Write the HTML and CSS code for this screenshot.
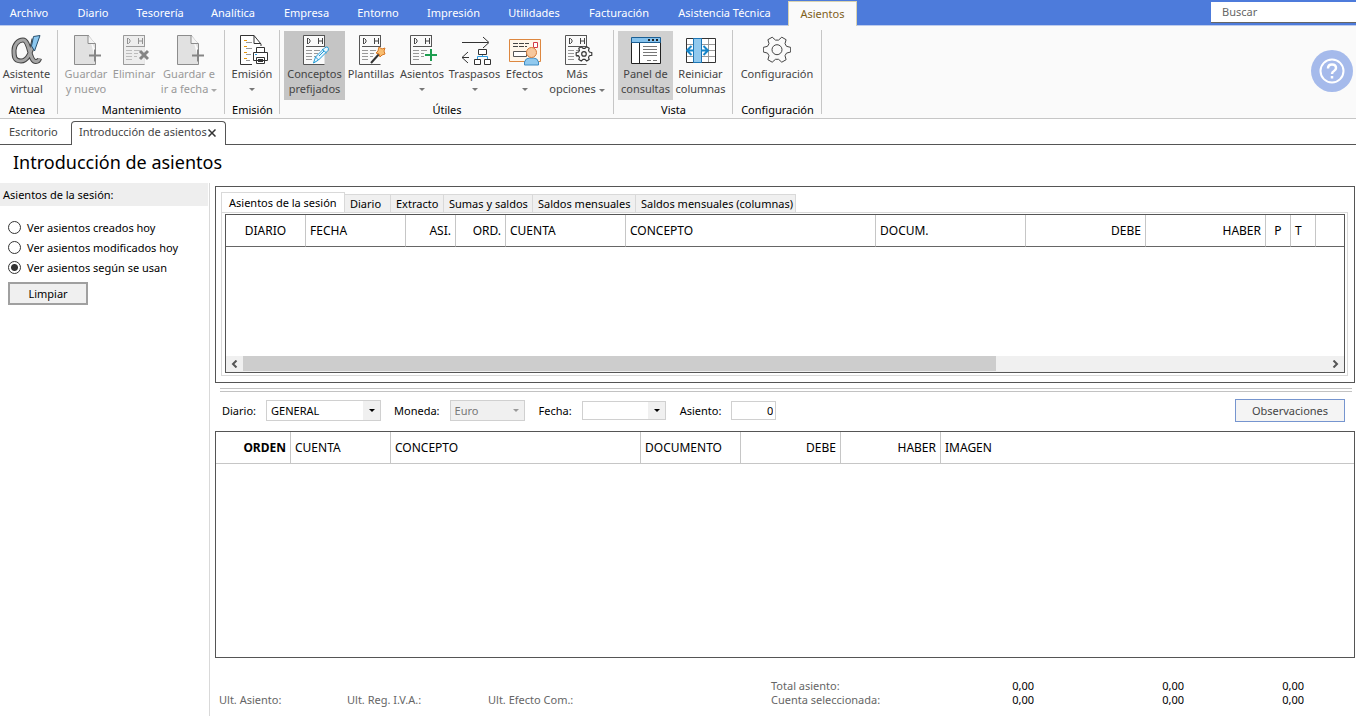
FILE: index.html
```html
<!DOCTYPE html>
<html lang="es">
<head>
<meta charset="utf-8">
<title>Introducción de asientos</title>
<link rel="stylesheet" href="styles.css">
</head>
<body>
<svg class="defs" width="0" height="0" aria-hidden="true">
  <defs>
    <g id="sheet">
      <path d="M21.500 1.500H.5v29h21" fill="#fafafa" stroke="#555"/>
      <path d="M21.500 1v11M3 12.500h19" stroke="#555" fill="none"/>
      <path d="M4.500 4v6M4 4.500h1.500l1.500 1.500v2l-1.500 1.500H4M15.500 4v6M19.500 4v6M15.500 7h4" fill="none" stroke="#444"/>
      <path d="M3 16.500h6M11 16.500h6M3 19.500h6M11 19.500h4M3 22.500h6M11 22.500h3M3 25.500h6" stroke="#999" fill="none"/>
    </g>
    <g id="newdoc">
      <path d="M15 1.500H.5v29h21V26M21.500 16v-6L14 1.500" fill="#e1e1e1" stroke="#8c8c8c"/>
      <path d="M14 1.500v8h7.500" fill="#f5f5f5" stroke="#8c8c8c"/>
      <path d="M15 21.500h12M21 15.500v12" stroke="#858585" stroke-width="2" fill="none"/>
    </g>
    <path id="cog" transform="rotate(90 14 14.700)" d="M11.700 1h4.600l1.100 4.200 2.600 1.500 4-1.100 2.500 4.300-2.900 3.300v3l2.900 3.300-2.500 4.300-4-1.100-2.600 1.500-1.100 4.200h-4.600l-1.100-4.200-2.600-1.500-4 1.100-2.500-4.300 2.900-3.300v-3L1.500 9.900 4 5.600l4 1.100 2.600-1.500z"/>
  </defs>
</svg>

<nav class="menubar">
  <div class="menu">
    <a href="#">Archivo</a><a href="#">Diario</a><a href="#">Tesorería</a><a href="#">Analítica</a><a href="#">Empresa</a><a href="#">Entorno</a><a href="#">Impresión</a><a href="#">Utilidades</a><a href="#">Facturación</a><a href="#">Asistencia Técnica</a><a href="#" class="current">Asientos</a>
  </div>
  <input class="search" type="text" placeholder="Buscar" aria-label="Buscar">
</nav>

<header class="ribbon">
  <section class="group g-atenea">
    <div class="tools">
      <button class="tool"><svg width="32" height="32" viewBox="0 0 32 32"><path d="M23 5C21 16 17 27 10 27S3 22 3 16.500 7 6 12 6C19 6 18 28 25 27.500c2 0 3-1 3.500-3" fill="none" stroke="#444" stroke-width="5"/><path d="M23 5C21 16 17 27 10 27S3 22 3 16.500 7 6 12 6C19 6 18 28 25 27.500c2 0 3-1 3.500-3" fill="none" stroke="#a5a5a5" stroke-width="3"/><path d="M22.500 2.500l6.500-1-5.500 15.500-3-5z" fill="#8cc8f0" stroke="#28506e"/></svg><span>Asistente<br>virtual</span></button>
    </div>
    <h2>Atenea</h2>
  </section>
  <section class="group g-mant">
    <div class="tools">
      <button class="tool doc" disabled><svg width="28" height="32" viewBox="0 0 28 32"><use href="#newdoc"/></svg><span>Guardar<br>y nuevo</span></button>
      <button class="tool doc" disabled><svg width="26" height="32" viewBox="0 0 26 32"><path d="M0 1h22v30H0z" fill="#e1e1e1"/><g opacity=".5"><use href="#sheet"/></g><path d="M17 17l8 8M25 17l-8 8" stroke="#858585" stroke-width="3"/></svg><span>Eliminar</span></button>
      <button class="tool doc" disabled><svg width="28" height="32" viewBox="0 0 28 32"><use href="#newdoc"/></svg><span>Guardar e<br>ir a fecha <i class="caret"></i></span></button>
    </div>
    <h2>Mantenimiento</h2>
  </section>
  <section class="group g-emision">
    <div class="tools">
      <button class="tool doc"><svg width="28" height="32" viewBox="0 0 28 32"><path d="M21 12v-2L14 1.500H.5v29H12" fill="#fff" stroke="#333"/><path d="M14 1.500v8h7" fill="none" stroke="#333"/><path d="M4 6.500h3M4 12.500h3M4 18.500h3M4 24.500h3" stroke="#e8960c"/><path d="M6 8.500h6M6 14.500h6M6 20.500h5M6 26.500h4" stroke="#999"/><path d="M13.500 18.500h14v8h-14zM16.500 18v-4.500h8V18M16.500 23.500h8v6h-8z" fill="#fff" stroke="#333"/><path d="M18 25.500h5M18 27.500h5" stroke="#333"/><path d="M15 20.500h2" stroke="#2a9ae0"/></svg><span>Emisión</span><i class="caret"></i></button>
    </div>
    <h2>Emisión</h2>
  </section>
  <section class="group g-utiles">
    <div class="tools">
      <button class="tool pressed doc"><svg width="26" height="32" viewBox="0 0 26 32"><use href="#sheet"/><path d="M10.500 29l2-6L22 13.500q2-1 3 0t0 3L15.500 26zM19 15l4.500 4M12.500 23l3 3M21 17l-5 5" fill="#eaf6ff" stroke="#1d9ad6"/></svg><span>Conceptos<br>prefijados</span></button>
      <button class="tool doc"><svg width="27" height="32" viewBox="0 0 27 32"><use href="#sheet"/><path d="M12 29l9-10" stroke="#333" stroke-width="2"/><path d="M20 13l3 2 3-1-1 3 1 3-3 1-2 2-1-3-3-1 2-2z" fill="#f8bd70" stroke="#d87825"/></svg><span>Plantillas</span></button>
      <button class="tool doc"><svg width="28" height="32" viewBox="0 0 28 32"><use href="#sheet"/><path d="M14 20.500h13M20.500 14v13" stroke="#fafafa" stroke-width="4"/><path d="M15 21h12M21 15v12" stroke="#1e9e50" stroke-width="2"/></svg><span>Asientos</span><i class="caret"></i></button>
      <button class="tool doc"><svg width="30" height="32" viewBox="0 0 30 32"><path d="M1 8.500h26M22 3l6 5.500-6 5.500M8 23.500H1M7 18l-6 5.500L7 29" fill="none" stroke="#333"/><path d="M17.500 15.500h8v5h-8zM13.500 25.500h6v5h-6zM23.500 25.500h6v5h-6z" fill="#fff" stroke="#333"/><path d="M21.500 21v1.500M16.500 25v-2.500h10V25" fill="none" stroke="#2a9ae0"/></svg><span>Traspasos</span><i class="caret"></i></button>
      <button class="tool"><svg width="32" height="32" viewBox="0 0 32 32"><path d="M.5 5.500h31v22H.5z" fill="#fff6ea" stroke="#dd8740"/><path d="M4 9.500h16M4 12.500h14" stroke="#444" stroke-dasharray="5 1"/><path d="M4.500 17.500h13v5h-13z" fill="#fff" stroke="#555"/><path d="M24.500 8.500h4v5h-4z" fill="#fff" stroke="#d33b48"/><path d="M15.500 31v-3q1-4 5-4h4q4 0 5 4v3z" fill="#91c9ee" stroke="#3f8cc4"/><circle cx="22.500" cy="18.500" r="5" fill="#f6c79c" stroke="#d77b38"/></svg><span>Efectos</span><i class="caret"></i></button>
      <button class="tool doc"><svg width="28" height="32" viewBox="0 0 28 32"><use href="#sheet"/><g transform="translate(11 11.500) scale(.57)" fill="#fafafa" stroke="#333" stroke-width="2"><use href="#cog"/><circle cx="14" cy="14.700" r="4"/></g></svg><span>Más<br>opciones <i class="caret"></i></span></button>
    </div>
    <h2>Útiles</h2>
  </section>
  <section class="group g-vista">
    <div class="tools">
      <button class="tool pressed light"><svg width="30" height="32" viewBox="0 0 30 32"><path d="M.5 4.500h29v25H.5z" fill="#fff" stroke="#222"/><path d="M.5 3.500h29v5H.5z" fill="#86c2ec" stroke="#1b5f94"/><path d="M17 6h2M21 6h2M25 6h2" stroke="#222" stroke-width="2"/><path d="M8.500 9v20" stroke="#222"/><path d="M12 12.500h14M12 15.500h14M12 18.500h14M12 21.500h14M16 26.500h4M22 26.500h4" stroke="#777"/></svg><span>Panel de<br>consultas</span></button>
      <button class="tool"><svg width="30" height="32" viewBox="0 0 30 32"><path d="M.5 4.500h29v24H.5z" fill="#fff" stroke="#333"/><path d="M22.500 5v23M1 10.500h28M1 16.500h28M1 22.500h28" stroke="#999"/><path d="M7.500 4.500h8v24h-8z" fill="#91c9ee" stroke="#1b75b5"/><path d="M8 16.500H1M5.500 12L1 16.500 5.500 21M15 16.500h6M17.500 12l4.500 4.500-4.500 4.500" fill="none" stroke="#1785c8" stroke-width="2"/></svg><span>Reiniciar<br>columnas</span></button>
    </div>
    <h2>Vista</h2>
  </section>
  <section class="group g-config">
    <div class="tools">
      <button class="tool"><svg width="28" height="32" viewBox="0 0 28 32"><g transform="translate(0 1)" fill="none" stroke="#444" stroke-linejoin="round"><use href="#cog"/><circle cx="14" cy="14.700" r="5"/></g></svg><span>Configuración</span></button>
    </div>
    <h2>Configuración</h2>
  </section>
  <button class="help" aria-label="Ayuda"><svg width="42" height="42" viewBox="0 0 42 42"><circle cx="21" cy="21" r="21" fill="#a5baeb"/><g fill="none" stroke="#fff" stroke-width="2"><circle cx="21" cy="21" r="11.500"/><path d="M17 18.500q0-4 4-4t4 3.500q0 2-2 3t-2 3" stroke-width="2.500"/><path d="M21 26v2.500" stroke-width="2.500"/></g></svg></button>
</header>

<div class="doctabs">
  <a href="#" class="doctab">Escritorio</a>
  <div class="doctab open"><a href="#">Introducción de asientos</a><button aria-label="Cerrar"><svg width="8" height="8" viewBox="0 0 8 8"><path d="M.5 .5l7 7M7.500 .5l-7 7" stroke="#333" stroke-width="1.500"/></svg></button></div>
  <div class="rest"></div>
</div>

<h1>Introducción de asientos</h1>

<div class="workspace">
  <aside class="sidebar">
    <h3>Asientos de la sesión:</h3>
    <form class="filters">
      <label><input type="radio" name="ver">Ver asientos creados hoy</label>
      <label><input type="radio" name="ver">Ver asientos modificados hoy</label>
      <label><input type="radio" name="ver" checked>Ver asientos según se usan</label>
      <button type="button">Limpiar</button>
    </form>
  </aside>

  <main class="content">
    <section class="session">
      <div class="subtabs">
        <button class="on">Asientos de la sesión</button><button>Diario</button><button>Extracto</button><button>Sumas y saldos</button><button>Saldos mensuales</button><button>Saldos mensuales (columnas)</button>
      </div>
      <div class="tabpage">
        <div class="grid">
          <table class="entries">
            <colgroup><col class="w80"><col class="w100"><col class="w50"><col class="w50"><col class="w120"><col class="w250"><col class="w150"><col class="w120"><col class="w120"><col class="w25"><col class="w25"><col></colgroup>
            <thead><tr><th class="mid">DIARIO</th><th>FECHA</th><th class="num">ASI.</th><th class="num">ORD.</th><th>CUENTA</th><th>CONCEPTO</th><th>DOCUM.</th><th class="num">DEBE</th><th class="num">HABER</th><th class="mid">P</th><th>T</th><th></th></tr></thead>
          </table>
          <div class="hscroll">
            <button aria-label="Anterior"><svg width="7" height="8" viewBox="0 0 7 8"><path d="M5.500 0.500L2 4l3.500 3.500" fill="none" stroke="#555" stroke-width="2"/></svg></button>
            <div class="track"><div class="thumb"></div></div>
            <button aria-label="Siguiente"><svg width="7" height="8" viewBox="0 0 7 8"><path d="M1.500 0.500L5 4 1.500 7.500" fill="none" stroke="#555" stroke-width="2"/></svg></button>
          </div>
        </div>
      </div>
    </section>

    <div class="splitter"></div>

    <form class="entry">
      <label for="diario">Diario:</label>
      <div class="combo c-diario"><select id="diario"><option>GENERAL</option></select></div>
      <label for="moneda">Moneda:</label>
      <div class="combo c-moneda off"><select id="moneda" disabled><option>Euro</option></select></div>
      <label for="fecha">Fecha:</label>
      <div class="combo c-fecha"><select id="fecha"><option></option></select></div>
      <label for="asiento">Asiento:</label>
      <input id="asiento" type="text" value="0">
      <button type="button" class="notes">Observaciones</button>
    </form>

    <section class="lines">
      <table>
        <colgroup><col class="w75"><col class="w100"><col class="w250"><col class="w100"><col class="w100"><col class="w100"><col></colgroup>
        <thead><tr><th class="num strong">ORDEN</th><th>CUENTA</th><th>CONCEPTO</th><th>DOCUMENTO</th><th class="num">DEBE</th><th class="num">HABER</th><th>IMAGEN</th></tr></thead>
      </table>
    </section>

    <footer class="totals">
      <div class="last"><span>Ult. Asiento:</span><span>Ult. Reg. I.V.A.:</span><span>Ult. Efecto Com.:</span></div>
      <div class="sums">
        <span>Total asiento:</span><b>0,00</b><b>0,00</b><b>0,00</b>
        <span>Cuenta seleccionada:</span><b>0,00</b><b>0,00</b><b>0,00</b>
      </div>
    </footer>
  </main>
</div>
</body>
</html>
```

FILE: styles.css
```css
* { box-sizing: border-box; }
body {
  margin: 0;
  min-height: 100vh;
  display: flex;
  flex-direction: column;
  background: #fff;
  color: #000;
  font: 11px/15px "Noto Sans", "Open Sans", sans-serif;
}
button, input, select { font: inherit; color: inherit; margin: 0; }
button { padding: 0; border: 0; background: none; }
a { color: inherit; text-decoration: none; }
h1, h2, h3 { margin: 0; font-weight: 400; }
.defs { position: absolute; }

.menubar {
  display: flex;
  justify-content: space-between;
  height: 26px;
  background: #4d7bdb;
  border-bottom: 1px solid #bccbed;
  color: #fff;
}
.menu { display: grid; grid-template-columns: 58px 70px 64px 82px 65px 78px 73px 88px 82px 129px 67px; }
.menu a { line-height: 26px; text-align: center; white-space: nowrap; }
.menu .current {
  height: 25px;
  width: 69px;
  margin: 1px 0 0 -1px;
  background: #fafafa;
  border: 1px solid #d9d3b0;
  border-bottom: 0;
  color: #80601a;
  line-height: 24px;
}
.search {
  width: 145px;
  height: 21px;
  margin-top: 2px;
  padding: 0 11px 2px;
  border: 0;
  border-bottom: 1px solid #666;
  background: #fff;
  outline: 0;
}
.search::placeholder { color: #666; opacity: 1; }

.ribbon {
  display: flex;
  height: 93px;
  background: #fafafa;
  border-bottom: 1px solid #c6c6c6;
}
.group {
  display: flex;
  flex-direction: column;
  margin: 4px 0;
  padding: 1px 4px 0;
  border-right: 1px solid #c6c6c6;
}
.group h2 { flex: none; margin-top: 2px; padding-left: 1px; font-size: 11px; line-height: 15px; text-align: center; white-space: nowrap; }
.tools { display: grid; flex: none; height: 69px; }
.g-atenea { width: 58px; padding-left: 0; }
.g-mant { width: 167px; }
.g-mant .tools { grid-template-columns: 48px 48px 62px; }
.g-emision { width: 55px; }
.g-utiles { width: 334px; }
.g-utiles .tools { grid-template-columns: 61px 52px 50px 55px 45px 60px; }
.g-vista { width: 119px; }
.g-vista .tools { grid-template-columns: 55px 55px; }
.g-config { width: 89px; }
.tool {
  display: flex;
  flex-direction: column;
  align-items: center;
  justify-content: flex-start;
  padding-top: 3px;
  color: #444;
  white-space: nowrap;
}
.tool svg { flex: none; }
.tool.doc svg { margin-left: 3px; }
.tool:disabled { color: #999; }
.tool.pressed { background: #c5c5c5; }
.tool.light { background: #d0d0d0; }
.caret {
  display: inline-block;
  vertical-align: middle;
  border: 3px solid transparent;
  border-top-color: #777;
  border-bottom: 0;
}
.tool > .caret { margin-top: 7px; }
.tool:disabled .caret { border-top-color: #aaa; }
.help { align-self: center; width: 42px; height: 42px; margin: 0 3px 2px auto; }
.help svg { display: block; }

.doctabs { display: flex; height: 26px; padding-top: 2px; color: #444; }
.doctab { padding: 0 14px 0 9px; width: 71px; line-height: 22px; border-bottom: 1px solid #555; }
.doctab.open {
  display: flex;
  align-items: flex-start;
  justify-content: space-between;
  width: 155px;
  padding: 0 9px 0 7px;
  border: 1px solid #555;
  border-bottom: 0;
  border-radius: 4px 4px 0 0;
  line-height: 20px;
  white-space: nowrap;
}
.doctab button { width: 8px; height: 8px; margin-top: 7px; }
.doctab svg { display: block; }
.rest { flex: 1; border-bottom: 1px solid #555; }

h1 { padding: 4px 13px 7px; font-size: 18px; line-height: 27px; }

.workspace { flex: 1; display: flex; }
.sidebar { flex: none; width: 210px; border-right: 1px solid #d9d9d9; }
.sidebar h3 { margin-right: 1px; padding: 0 3px; background: #eee; font-size: 11px; line-height: 23px; }
.filters { display: flex; flex-direction: column; align-items: flex-start; padding: 11px 8px; }
.filters label { display: flex; align-items: center; gap: 6px; height: 20px; }
.filters input {
  appearance: none;
  width: 13px;
  height: 13px;
  border: 1px solid #333;
  border-radius: 50%;
  background: #fff;
}
.filters input:checked { background: radial-gradient(circle, #333 0 3px, #fff 4px); }
.filters button { width: 80px; height: 23px; margin-top: 5px; border: 2px solid #a0a0a0; background: #f0f0f0; }

.content { flex: 1; min-width: 0; display: flex; flex-direction: column; padding: 3px 1px 0 5px; }
.session { height: 197px; display: flex; flex-direction: column; padding: 5px 6px 6px 5px; border: 1px solid #555; }
.subtabs { display: grid; grid-template-columns: 124px 46px 53px 89px 103px 160px; align-items: end; height: 20px; }
.subtabs button {
  height: 18px;
  padding: 0 5px;
  border: 1px solid #d9d9d9;
  border-left-width: 0;
  border-bottom: 0;
  background: #f0f0f0;
  text-align: left;
  white-space: nowrap;
}
.subtabs .on { height: 20px; padding: 0 7px; border-left-width: 1px; background: #fff; }
.tabpage { flex: 1; display: flex; padding: 1px 2px 2px 3px; border: 1px solid #d9d9d9; }
.grid { flex: 1; min-width: 0; display: flex; flex-direction: column; justify-content: space-between; border: 1px solid #555; }
table { width: 100%; table-layout: fixed; border-collapse: separate; border-spacing: 0; }
th {
  height: 32px;
  padding: 0 4px;
  border-right: 1px solid #c6c6c6;
  border-bottom: 1px solid #c6c6c6;
  font-size: 12px;
  font-weight: 400;
  text-align: left;
  white-space: nowrap;
}
th:last-child { border-right: 0; }
.entries th { border-bottom-color: #666; }
.mid { text-align: center; }
.num { text-align: right; }
.strong { font-weight: 700; }
.w25 { width: 25px; }
.w50 { width: 50px; }
.w75 { width: 75px; }
.w80 { width: 80px; }
.w100 { width: 100px; }
.w120 { width: 120px; }
.w150 { width: 150px; }
.w250 { width: 250px; }
.hscroll { display: flex; height: 16px; background: #f0f0f0; }
.hscroll button { display: flex; align-items: center; justify-content: center; width: 17px; }
.track { flex: 1; }
.thumb { width: 69.5%; height: 15px; background: #cdcdcd; }

.splitter { height: 4px; margin: 5px 3px 8px 5px; border: 1px solid #c2c2c2; border-width: 1px 0; }

.entry { display: flex; align-items: center; height: 21px; margin: 0 10px 10px 7px; }
.entry label { white-space: nowrap; }
.combo { position: relative; display: flex; height: 21px; border: 1px solid #d0d0d0; background: linear-gradient(#f0f0f0, #f0f0f0) right / 17px 100% no-repeat #fff; }
.combo::after {
  content: "";
  position: absolute;
  right: 5px;
  top: 8px;
  border: 3px solid transparent;
  border-top-color: #000;
  border-bottom: 0;
  pointer-events: none;
}
.combo select { width: 100%; padding: 0 4px; border: 0; background: none; appearance: none; }
.combo.off { background: #f0f0f0; color: #777; }
.combo.off select { color: #777; opacity: 1; }
.combo.off::after { border-top-color: #999; }
.c-diario { width: 115px; margin: 0 13px 0 10px; }
.c-moneda { width: 75px; margin: 0 14px 0 10px; }
.c-fecha { width: 84px; height: 19px; margin: 0 14px 0 10px; }
.c-fecha::after { top: 7px; }
.entry input { width: 45px; height: 19px; margin-left: 10px; padding: 0 2px; border: 1px solid #d0d0d0; text-align: right; }
.notes { width: 110px; height: 23px; margin-left: auto; border: 1px solid #7695cf; background: #f4f4f4; color: #444; }

.lines { flex: 1; border: 1px solid #555; }

.totals { display: flex; align-items: flex-end; height: 58px; padding: 0 51px 9px 4px; color: #666; line-height: 14px; }
.last { display: grid; grid-template-columns: 128px 141px 283px; }
.sums { flex: 1; display: grid; grid-template-columns: 144px 1fr 150px 120px; }
.sums b { color: #000; font-weight: 400; text-align: right; }
```
